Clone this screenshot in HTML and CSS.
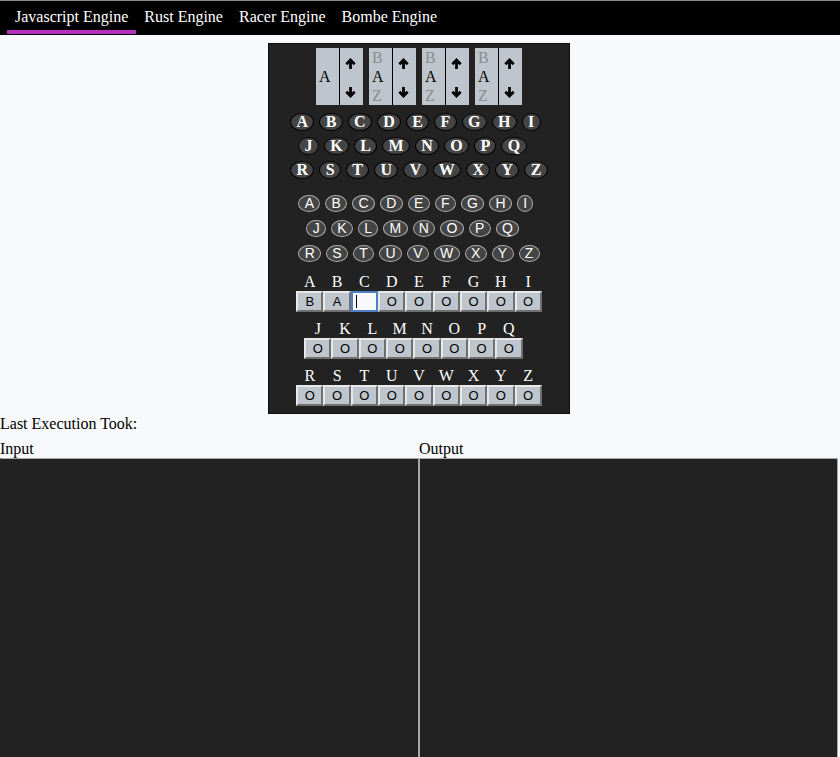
FILE: index.html
```html
<!DOCTYPE html>
<html lang="en">
<head>
<meta charset="utf-8">
<title>Enigma</title>
<link rel="stylesheet" href="styles.css">
</head>
<body>
<nav class="nav">
  <a class="nav-item active">Javascript Engine</a>
  <a class="nav-item">Rust Engine</a>
  <a class="nav-item">Racer Engine</a>
  <a class="nav-item">Bombe Engine</a>
</nav>
<main class="page">
  <div class="machine">
    <div class="rotors">
      <div class="rotor">
        <div class="rotor-letters"><span class="dim"></span><span>A</span><span class="dim"></span></div>
        <div class="rotor-arrows">
          <svg class="arrow" viewBox="0 0 10 10"><path d="M5 10V2.2M1.2 5.6L5 1.8 8.8 5.6"/></svg>
          <svg class="arrow" viewBox="0 0 10 10"><path d="M5 0V7.8M1.2 4.4L5 8.2 8.8 4.4"/></svg>
        </div>
      </div>
      <div class="rotor">
        <div class="rotor-letters"><span class="dim">B</span><span>A</span><span class="dim">Z</span></div>
        <div class="rotor-arrows">
          <svg class="arrow" viewBox="0 0 10 10"><path d="M5 10V2.2M1.2 5.6L5 1.8 8.8 5.6"/></svg>
          <svg class="arrow" viewBox="0 0 10 10"><path d="M5 0V7.8M1.2 4.4L5 8.2 8.8 4.4"/></svg>
        </div>
      </div>
      <div class="rotor">
        <div class="rotor-letters"><span class="dim">B</span><span>A</span><span class="dim">Z</span></div>
        <div class="rotor-arrows">
          <svg class="arrow" viewBox="0 0 10 10"><path d="M5 10V2.2M1.2 5.6L5 1.8 8.8 5.6"/></svg>
          <svg class="arrow" viewBox="0 0 10 10"><path d="M5 0V7.8M1.2 4.4L5 8.2 8.8 4.4"/></svg>
        </div>
      </div>
      <div class="rotor">
        <div class="rotor-letters"><span class="dim">B</span><span>A</span><span class="dim">Z</span></div>
        <div class="rotor-arrows">
          <svg class="arrow" viewBox="0 0 10 10"><path d="M5 10V2.2M1.2 5.6L5 1.8 8.8 5.6"/></svg>
          <svg class="arrow" viewBox="0 0 10 10"><path d="M5 0V7.8M1.2 4.4L5 8.2 8.8 4.4"/></svg>
        </div>
      </div>
    </div>

    <div class="board lamps">
      <div class="row"><span class="lamp">A</span><span class="lamp">B</span><span class="lamp">C</span><span class="lamp">D</span><span class="lamp">E</span><span class="lamp">F</span><span class="lamp">G</span><span class="lamp">H</span><span class="lamp">I</span></div>
      <div class="row indent"><span class="lamp">J</span><span class="lamp">K</span><span class="lamp">L</span><span class="lamp">M</span><span class="lamp">N</span><span class="lamp">O</span><span class="lamp">P</span><span class="lamp">Q</span></div>
      <div class="row"><span class="lamp">R</span><span class="lamp">S</span><span class="lamp">T</span><span class="lamp">U</span><span class="lamp">V</span><span class="lamp">W</span><span class="lamp">X</span><span class="lamp">Y</span><span class="lamp">Z</span></div>
    </div>

    <div class="board keys">
      <div class="row"><span class="key">A</span><span class="key">B</span><span class="key">C</span><span class="key">D</span><span class="key">E</span><span class="key">F</span><span class="key">G</span><span class="key">H</span><span class="key">I</span></div>
      <div class="row indent"><span class="key">J</span><span class="key">K</span><span class="key">L</span><span class="key">M</span><span class="key">N</span><span class="key">O</span><span class="key">P</span><span class="key">Q</span></div>
      <div class="row"><span class="key">R</span><span class="key">S</span><span class="key">T</span><span class="key">U</span><span class="key">V</span><span class="key">W</span><span class="key">X</span><span class="key">Y</span><span class="key">Z</span></div>
    </div>

    <div class="board plugboard">
      <div class="plug-row">
        <div class="plug"><span class="plug-label">A</span><span class="plug-input">B</span></div>
        <div class="plug"><span class="plug-label">B</span><span class="plug-input">A</span></div>
        <div class="plug"><span class="plug-label">C</span><span class="plug-input focused"><span class="caret"></span></span></div>
        <div class="plug"><span class="plug-label">D</span><span class="plug-input">O</span></div>
        <div class="plug"><span class="plug-label">E</span><span class="plug-input">O</span></div>
        <div class="plug"><span class="plug-label">F</span><span class="plug-input">O</span></div>
        <div class="plug"><span class="plug-label">G</span><span class="plug-input">O</span></div>
        <div class="plug"><span class="plug-label">H</span><span class="plug-input">O</span></div>
        <div class="plug"><span class="plug-label">I</span><span class="plug-input">O</span></div>
      </div>
      <div class="plug-row indent">
        <div class="plug"><span class="plug-label">J</span><span class="plug-input">O</span></div>
        <div class="plug"><span class="plug-label">K</span><span class="plug-input">O</span></div>
        <div class="plug"><span class="plug-label">L</span><span class="plug-input">O</span></div>
        <div class="plug"><span class="plug-label">M</span><span class="plug-input">O</span></div>
        <div class="plug"><span class="plug-label">N</span><span class="plug-input">O</span></div>
        <div class="plug"><span class="plug-label">O</span><span class="plug-input">O</span></div>
        <div class="plug"><span class="plug-label">P</span><span class="plug-input">O</span></div>
        <div class="plug"><span class="plug-label">Q</span><span class="plug-input">O</span></div>
      </div>
      <div class="plug-row">
        <div class="plug"><span class="plug-label">R</span><span class="plug-input">O</span></div>
        <div class="plug"><span class="plug-label">S</span><span class="plug-input">O</span></div>
        <div class="plug"><span class="plug-label">T</span><span class="plug-input">O</span></div>
        <div class="plug"><span class="plug-label">U</span><span class="plug-input">O</span></div>
        <div class="plug"><span class="plug-label">V</span><span class="plug-input">O</span></div>
        <div class="plug"><span class="plug-label">W</span><span class="plug-input">O</span></div>
        <div class="plug"><span class="plug-label">X</span><span class="plug-input">O</span></div>
        <div class="plug"><span class="plug-label">Y</span><span class="plug-input">O</span></div>
        <div class="plug"><span class="plug-label">Z</span><span class="plug-input">O</span></div>
      </div>
    </div>
  </div>

  <div class="timing">Last Execution Took:</div>

  <div class="io">
    <div class="io-col">
      <label class="io-label">Input</label>
      <textarea class="io-text first"></textarea>
    </div>
    <div class="io-col">
      <label class="io-label">Output</label>
      <textarea class="io-text"></textarea>
    </div>
  </div>
</main>
</body>
</html>
```
FILE: styles.css
```css
html, body {
  margin: 0;
  padding: 0;
}
body {
  background: #f8f9fa;
  color: #000;
  font-family: "Liberation Serif", "Times New Roman", serif;
  font-size: 16px;
  overflow: hidden;
}

/* nav */
.nav {
  display: flex;
  align-items: flex-start;
  height: 34px;
  background: #000;
  border-top: 1px solid #8a8a8a;
  padding-left: 7px;
}
.nav-item {
  color: #fff;
  line-height: 18px;
  padding: 7px 8px 4px;
  border-bottom: 4px solid transparent;
  cursor: pointer;
}
.nav-item.active {
  border-bottom-color: #b52fbb;
}

.page {
  width: 838px;
}

/* machine panel */
.machine {
  width: 300px;
  margin: 8px auto 0;
  padding: 4px 0 7px;
  background: #222;
  border: 1px solid #0e0e0e;
}

.rotors {
  display: flex;
  justify-content: center;
  gap: 6px;
}
.rotor {
  display: flex;
  height: 57px;
  background: #bec5cc;
}
.rotor-letters {
  width: 20px;
  padding-left: 3px;
  display: flex;
  flex-direction: column;
  border-right: 1px solid #000;
}
.rotor-letters span {
  height: 19px;
  line-height: 19px;
}
.rotor-letters .dim {
  color: #8c8c8c;
}
.rotor-arrows {
  width: 23px;
  box-sizing: border-box;
  display: flex;
  flex-direction: column;
  justify-content: space-between;
  align-items: center;
  padding: 10px 3px 7px 0;
}
.arrow {
  width: 11px;
  height: 11px;
  display: block;
  fill: none;
  stroke: #000;
  stroke-width: 2.5;
}

/* boards */
.board {
  width: fit-content;
  margin-left: auto;
  margin-right: auto;
  display: flex;
  flex-direction: column;
}
.row {
  display: flex;
  gap: 5px;
}
.row.indent,
.plug-row.indent {
  margin-left: 8px;
}

.lamps {
  margin-top: 8px;
  gap: 6px;
}
.lamp {
  color: #fff;
  font-weight: bold;
  background: #444;
  border: 1px solid #000;
  border-radius: 50%;
  padding: 0 5.3px;
  height: 16px;
  line-height: 16px;
}

.keys {
  margin-top: 16px;
  gap: 8px;
}
.key {
  color: #fff;
  font-family: "Liberation Sans", Arial, sans-serif;
  font-size: 14px;
  background: #444;
  border: 1px solid #ababab;
  border-radius: 50%;
  padding: 0 5.3px;
  height: 15px;
  line-height: 15px;
}

.plugboard {
  margin-top: 10px;
  gap: 7px;
}
.plug-row {
  display: flex;
}
.plug {
  width: 27.3px;
  display: flex;
  flex-direction: column;
  align-items: center;
}
.plug-label {
  color: #fff;
  height: 19px;
  line-height: 19px;
}
.plug-input {
  width: 27.3px;
  height: 21px;
  box-sizing: border-box;
  background: #bec5cc;
  border-style: solid;
  border-width: 2px;
  border-color: #e6e8ea #6f6f6f #6f6f6f #e6e8ea;
  font-family: "Liberation Sans", Arial, sans-serif;
  font-size: 13px;
  line-height: 17px;
  text-align: center;
  color: #000;
}
.plug-input.focused {
  background: #f8f9fa;
  border-color: #4f7fc4;
  text-align: left;
  padding: 2px 0 0 3px;
}
.caret {
  display: block;
  width: 1px;
  height: 13px;
  background: #000;
}

/* bottom area */
.timing {
  margin-top: 1px;
  line-height: 18px;
}
.io {
  margin-top: 7px;
  display: grid;
  grid-template-columns: 419px 419px;
}
.io-col {
  display: flex;
  flex-direction: column;
}
.io-label {
  line-height: 18px;
}
.io-text {
  display: block;
  width: 419px;
  height: 300px;
  box-sizing: border-box;
  margin: 0;
  background: #222;
  border: 1px solid #a9a9a9;
  resize: none;
  color: #fff;
}
.io-text.first {
  border-left-color: #222;
}
```
